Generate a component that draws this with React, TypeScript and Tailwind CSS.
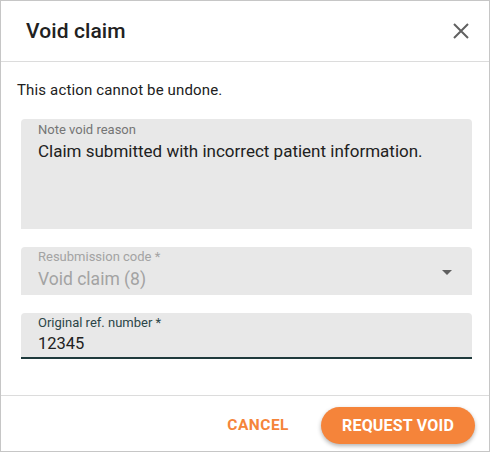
import React from "react";

export default function App() {
  return (
    <div
      className="w-[490px] h-[452px] bg-white border border-[#c6c6c6] flex flex-col overflow-hidden"
      style={{ fontFamily: "Roboto, 'Liberation Sans', sans-serif" }}
    >
      <div className="h-[61px] shrink-0 flex items-center justify-between pl-[25px] pr-[19px] pt-[2px] border-b border-[#dcdcdc]">
        <div className="text-[21px] font-medium text-[#212121] tracking-[0.1px]">Void claim</div>
        <svg width="18" height="18" viewBox="0 0 18 18" className="text-[#616161] -mt-[2px]">
          <path d="M2 2 L16 16 M16 2 L2 16" stroke="currentColor" strokeWidth="2" strokeLinecap="butt" />
        </svg>
      </div>
      <div className="h-[334px] shrink-0 flex flex-col border-b border-[#dcdcdc]">
        <div className="pl-[16px] pt-[18px] h-[57px] text-[15px] tracking-[0.15px] text-[#212121] leading-[20px]">
          This action cannot be undone.
        </div>
        <div className="ml-[20px] w-[451px] h-[110px] bg-[#e8e8e8] rounded-t-[4px] px-[17px] pt-[3px]">
          <div className="text-[13px] leading-[16px] text-[#757575]">Note void reason</div>
          <div className="mt-[2px] text-[17px] leading-[22px] text-[#212121]">
            Claim submitted with incorrect patient information.
          </div>
        </div>
        <div className="ml-[20px] mt-[18px] w-[451px] h-[48px] bg-[#e8e8e8] rounded-t-[4px] pl-[17px] pr-[20px] pt-[2px] flex items-start justify-between">
          <div>
            <div className="text-[13px] leading-[16px] text-[#a3a3a3]">Resubmission code *</div>
            <div className="mt-[2px] text-[17.5px] leading-[24px] text-[#a3a3a3]">Void claim (8)</div>
          </div>
          <svg width="10" height="5" viewBox="0 0 10 5" className="mt-[21px]">
            <path d="M0 0 L10 0 L5 5 Z" fill="#5f5f5f" />
          </svg>
        </div>
        <div className="ml-[20px] mt-[18px] w-[451px] h-[46px] bg-[#e8e8e8] rounded-t-[4px] px-[17px] pt-[2px] border-b-2 border-[#1f3a3c]">
          <div className="text-[13px] leading-[16px] text-[#2b4547]">Original ref. number *</div>
          <div className="mt-[2px] text-[16.5px] leading-[22px] text-[#212121]">12345</div>
        </div>
      </div>
      <div className="flex-1 flex items-center justify-end pr-[14px] gap-[32px] pt-[4px]">
        <button className="text-[15.5px] font-bold tracking-[0.5px] text-[#f5843a]">CANCEL</button>
        <button className="h-[37px] w-[154px] rounded-full bg-[#f5843a] text-white text-[16px] font-bold tracking-[0.2px] shadow-[0_2px_4px_rgba(0,0,0,0.3)]">
          REQUEST VOID
        </button>
      </div>
    </div>
  );
}
